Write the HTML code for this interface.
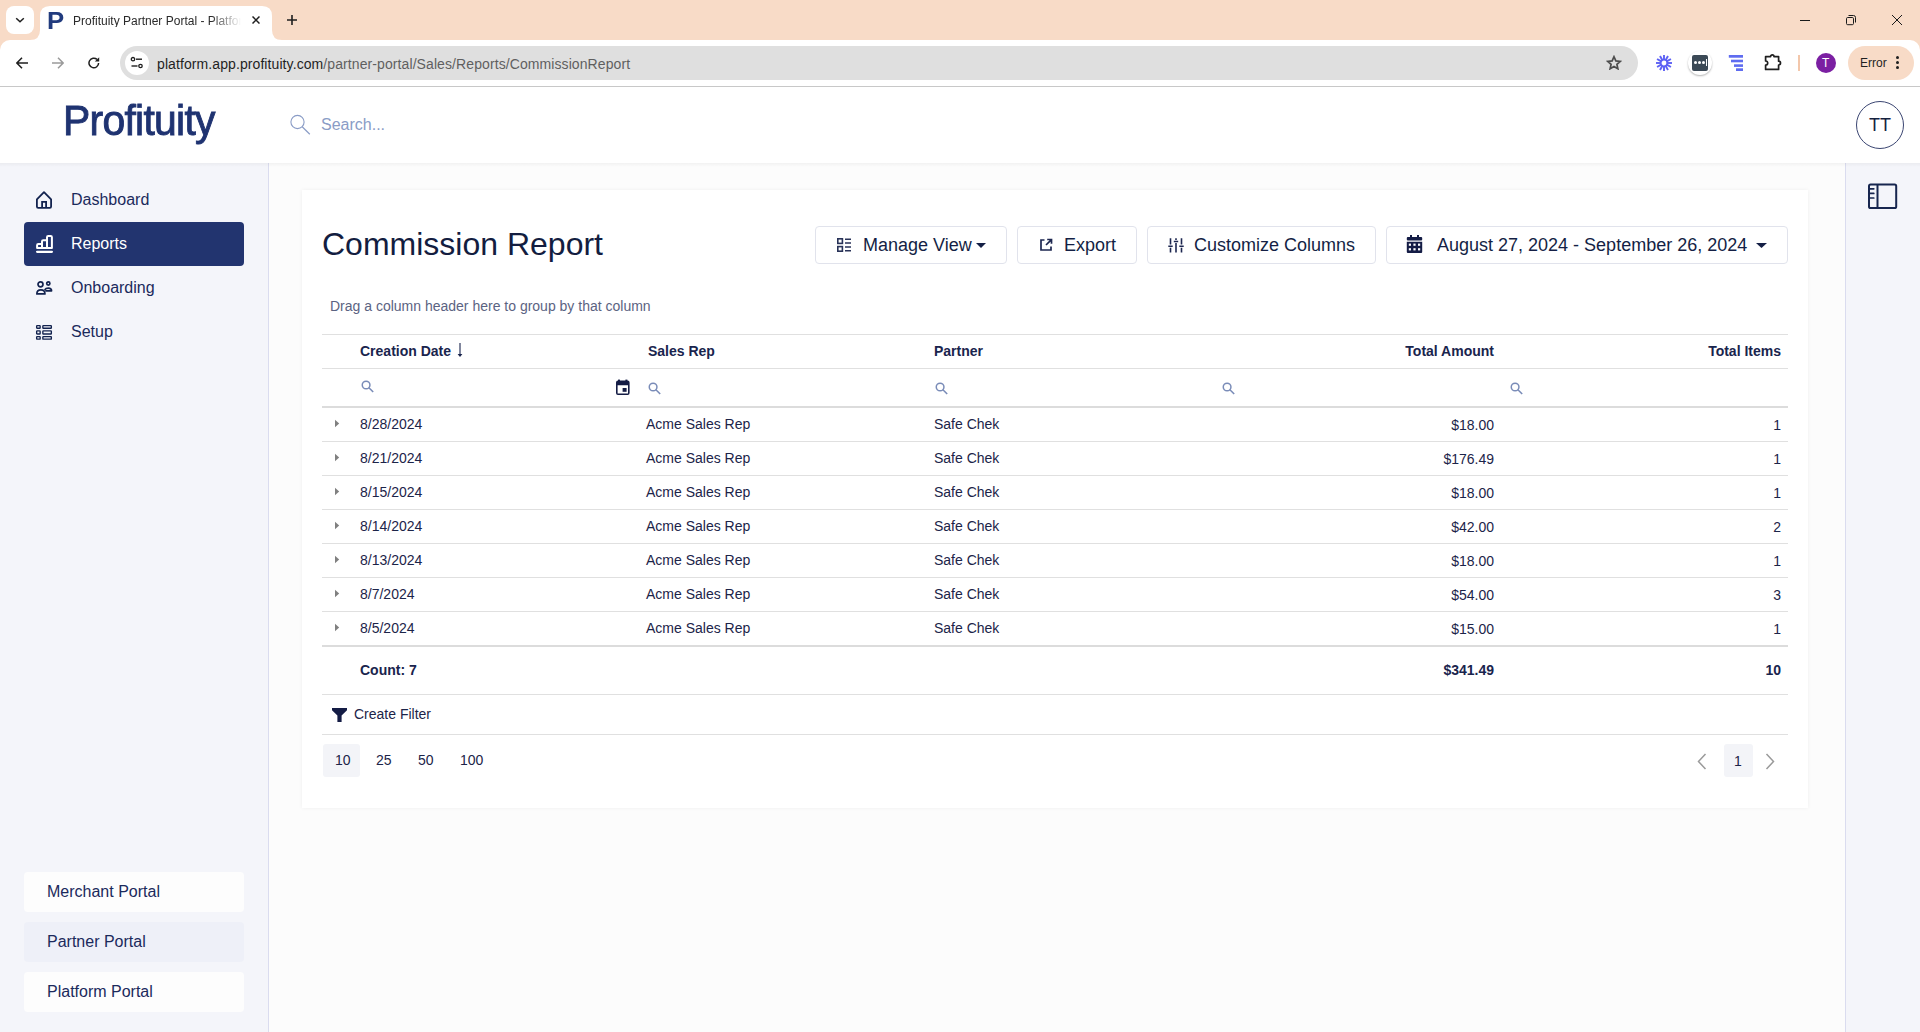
<!DOCTYPE html>
<html><head><meta charset="utf-8">
<style>
*{box-sizing:border-box;margin:0;padding:0}
html,body{width:1920px;height:1032px;overflow:hidden;background:#fcfcfc;font-family:"Liberation Sans",sans-serif;position:relative}
.a{position:absolute}
.t{position:absolute;white-space:nowrap;line-height:1}
/* chrome */
#tabstrip{left:0;top:0;width:1920px;height:52px;background:#f8dbc7}
#toolbar{left:0;top:40px;width:1920px;height:46px;background:#fff}
#tbline{left:0;top:86px;width:1920px;height:1px;background:#c8c8c8}
/* app */
#hdr{left:0;top:87px;width:1920px;height:76px;background:#fff}
#side{left:0;top:163px;width:269px;height:869px;background:#f4f5fa;border-right:1px solid #dadcef}
#rpanel{left:1845px;top:163px;width:75px;height:869px;background:#f4f5fa;border-left:1px solid #dadcef}
#card{left:302px;top:190px;width:1506px;height:618px;background:#fff;box-shadow:0 0 4px rgba(0,0,0,.06)}
.navy{color:#1b2a5c}
.hl{position:absolute;left:322px;width:1466px;height:1px;background:#e0e0e0}
.btn{position:absolute;top:226px;height:38px;border:1px solid #e1e3ec;border-radius:4px;background:#fff}
</style></head><body>
<!-- CHROME -->
<div id="tabstrip" class="a"></div>
<div class="a" style="left:6px;top:6px;width:28px;height:28px;background:#fff;border-radius:8px"></div>
<svg class="a" style="left:14px;top:14px" width="12" height="12" viewBox="0 0 12 12"><path d="M2.2 4.2 L6 7.8 L9.8 4.2" fill="none" stroke="#1f1f1f" stroke-width="1.5"/></svg>
<!-- active tab -->
<svg class="a" style="left:30px;top:6px" width="252" height="34" viewBox="0 0 252 34"><path d="M0 34 Q10 34 10 24 L10 10 Q10 0 20 0 L232 0 Q242 0 242 10 L242 24 Q242 34 252 34 Z" fill="#fff"/></svg>
<div class="t" style="left:47px;top:11px;font-size:23px;font-weight:bold;color:#213b7e;line-height:20px;transform:scaleX(1.12);transform-origin:0 0">P</div>
<div class="t" style="left:73px;top:15px;font-size:12px;color:#2a2a2a;width:168px;overflow:hidden;-webkit-mask-image:linear-gradient(to right,#000 82%,transparent 100%)">Profituity Partner Portal - Platform</div>
<svg class="a" style="left:252px;top:16px" width="8" height="8" viewBox="0 0 8 8"><path d="M0.5 0.5 L7.5 7.5 M7.5 0.5 L0.5 7.5" stroke="#1f1f1f" stroke-width="1.5"/></svg>
<svg class="a" style="left:287px;top:15px" width="10" height="10" viewBox="0 0 10 10"><path d="M5 0 V10 M0 5 H10" stroke="#1f1f1f" stroke-width="1.6"/></svg>
<!-- window controls -->
<div class="a" style="left:1800px;top:20px;width:10px;height:1px;background:#1a1a1a"></div>
<svg class="a" style="left:1845px;top:14px" width="12" height="12" viewBox="0 0 12 12"><rect x="1.5" y="3.5" width="7" height="7.2" rx="1.2" fill="none" stroke="#1a1a1a" stroke-width="1"/><path d="M3.5 1.5 H8.5 Q10.5 1.5 10.5 3.5 V8.5" fill="none" stroke="#1a1a1a" stroke-width="1"/></svg>
<svg class="a" style="left:1892px;top:15px" width="10" height="10" viewBox="0 0 10 10"><path d="M0 0 L10 10 M10 0 L0 10" stroke="#1a1a1a" stroke-width="1"/></svg>
<!-- toolbar -->
<div id="toolbar" class="a" style="border-radius:10px 10px 0 0"></div>
<div id="tbline" class="a"></div>
<svg class="a" style="left:16px;top:57px" width="12" height="12" viewBox="0 0 12 12"><path d="M6 0.8 L0.9 6 L6 11.2 M1 6 H12" fill="none" stroke="#1f1f1f" stroke-width="1.5"/></svg>
<svg class="a" style="left:52px;top:57px" width="12" height="12" viewBox="0 0 12 12"><path d="M6 0.8 L11.1 6 L6 11.2 M11 6 H0" fill="none" stroke="#9a9a9a" stroke-width="1.5"/></svg>
<svg class="a" style="left:88px;top:57px" width="12" height="12" viewBox="0 0 12 12"><path d="M10.6 6 A4.8 4.8 0 1 1 9 2.4" fill="none" stroke="#1f1f1f" stroke-width="1.5"/><path d="M11.2 0.2 V4.6 H6.8 Z" fill="#1f1f1f"/></svg>
<div class="a" style="left:120px;top:46px;width:1518px;height:34px;border-radius:17px;background:#dfdfdf"></div>
<div class="a" style="left:125px;top:51px;width:24px;height:24px;border-radius:12px;background:#fff"></div>
<svg class="a" style="left:130px;top:56px" width="14" height="14" viewBox="0 0 14 14"><circle cx="3" cy="3.2" r="1.7" fill="none" stroke="#1f1f1f" stroke-width="1.3"/><path d="M6 3.2 H12" stroke="#1f1f1f" stroke-width="1.4"/><circle cx="10.5" cy="10" r="1.7" fill="none" stroke="#1f1f1f" stroke-width="1.3"/><path d="M1.5 10 H7.5" stroke="#1f1f1f" stroke-width="1.4"/></svg>
<div class="t" style="left:157px;top:57px;font-size:14px;color:#1f1f1f;letter-spacing:0.09px">platform.app.profituity.com<span style="color:#5f5f5f">/partner-portal/Sales/Reports/CommissionReport</span></div>
<svg class="a" style="left:1606px;top:55px" width="16" height="15.33" viewBox="0 0 24 23"><path d="M12 2.6 L14.8 8.8 L21.4 9.5 L16.4 14 L17.8 20.6 L12 17.2 L6.2 20.6 L7.6 14 L2.6 9.5 L9.2 8.8 Z" fill="none" stroke="#4d4d4d" stroke-width="2.6" stroke-linejoin="miter"/></svg>
<svg class="a" style="left:1655px;top:54px" width="18" height="18" viewBox="0 0 18 18"><g stroke="#5d61f4" stroke-width="1.9" stroke-linecap="butt"><path d="M12.20 9.00 L17.00 9.00"/><path d="M11.77 10.60 L15.93 13.00"/><path d="M10.60 11.77 L13.00 15.93"/><path d="M9.00 12.20 L9.00 17.00"/><path d="M7.40 11.77 L5.00 15.93"/><path d="M6.23 10.60 L2.07 13.00"/><path d="M5.80 9.00 L1.00 9.00"/><path d="M6.23 7.40 L2.07 5.00"/><path d="M7.40 6.23 L5.00 2.07"/><path d="M9.00 5.80 L9.00 1.00"/><path d="M10.60 6.23 L13.00 2.07"/><path d="M11.77 7.40 L15.93 5.00"/></g><circle cx="9" cy="9" r="3.3" fill="none" stroke="#5d61f4" stroke-width="1.8"/></svg>
<div class="a" style="left:1688px;top:51px;width:24px;height:24px;border-radius:12px;background:#fff;box-shadow:0 1px 2px rgba(0,0,0,.3)"></div>
<div class="a" style="left:1692px;top:55px;width:16px;height:16px;border-radius:2px;background:#3b4956"></div>
<div class="a" style="left:1694px;top:61px;width:3px;height:3px;border-radius:2px;background:#fff"></div>
<div class="a" style="left:1698px;top:61px;width:3px;height:3px;border-radius:2px;background:#fff"></div>
<div class="a" style="left:1702px;top:61px;width:3px;height:3px;border-radius:2px;background:#fff"></div>
<div class="a" style="left:1706px;top:59px;width:1px;height:7px;background:#fff"></div>
<svg class="a" style="left:1728px;top:54px" width="16" height="18" viewBox="0 0 16 18"><g fill="#5f6cf0"><rect x="0.8" y="1" width="14.2" height="2.7"/><rect x="3" y="5.7" width="12" height="2.6"/><rect x="6" y="10.3" width="9" height="2.6"/><rect x="8" y="14.3" width="7" height="2.7"/></g></svg>
<svg class="a" style="left:1763px;top:52px" width="20" height="20" viewBox="0 0 20 20"><path d="M2.6 4.6 H7.6 A1.7 1.7 0 0 1 11 4.6 H15.6 V9.2 A1.9 1.9 0 0 1 15.6 13 V17.4 H2.6 V13.2 A2.1 2.1 0 0 0 2.6 9 Z" fill="none" stroke="#1f1f1f" stroke-width="1.7" stroke-linejoin="round"/></svg>
<div class="a" style="left:1798px;top:55px;width:2px;height:16px;background:#f3c7ab"></div>
<div class="a" style="left:1816px;top:53px;width:20px;height:20px;border-radius:10px;background:#7b1fa2"></div>
<div class="t" style="left:1822px;top:57px;font-size:12px;color:#fff">T</div>
<div class="a" style="left:1848px;top:46px;width:66px;height:34px;border-radius:17px;background:#f8dbc7"></div>
<div class="t" style="left:1860px;top:57px;font-size:12px;color:#1f1f1f">Error</div>
<div class="a" style="left:1896px;top:56px;width:3px;height:3px;border-radius:2px;background:#1f1f1f"></div>
<div class="a" style="left:1896px;top:61px;width:3px;height:3px;border-radius:2px;background:#1f1f1f"></div>
<div class="a" style="left:1896px;top:66px;width:3px;height:3px;border-radius:2px;background:#1f1f1f"></div>

<!-- APP -->
<div id="side" class="a"></div>
<div id="rpanel" class="a"></div>
<div id="hdr" class="a"></div>
<div class="a" style="left:0;top:163px;width:1920px;height:4px;background:linear-gradient(rgba(0,0,0,.04),rgba(0,0,0,0))"></div>
<div class="t" style="left:63px;top:96px;font-size:43px;font-weight:normal;-webkit-text-stroke:0.9px #1f3371;color:#1f3371;letter-spacing:-0.75px;line-height:48px;transform:scaleX(0.95);transform-origin:0 0">Profituity</div>
<svg class="a" style="left:289px;top:114px" width="23" height="23" viewBox="0 0 23 23"><circle cx="8.5" cy="8" r="6.6" fill="none" stroke="#8a9cc6" stroke-width="1.1"/><path d="M13.2 12.8 L20.8 20.3" stroke="#8a9cc6" stroke-width="1.2"/></svg>
<div class="t" style="left:321px;top:117px;font-size:16px;color:#8a9cc6">Search...</div>
<div class="a" style="left:1856px;top:101px;width:48px;height:48px;border-radius:24px;border:1.2px solid #3b4672;background:#fff"></div>
<div class="t" style="left:1869px;top:116px;font-size:18px;color:#15213f">TT</div>

<!-- sidebar nav -->
<svg class="a" style="left:35px;top:190px" width="19" height="20" viewBox="0 0 19 20"><path d="M1.9 9.4 L9 2.2 L16.1 9.4 V16.6 Q16.1 17.9 14.8 17.9 H3.2 Q1.9 17.9 1.9 16.6 Z" fill="none" stroke="#13234f" stroke-width="1.8" stroke-linejoin="round"/><path d="M7.1 17.9 V11.9 H11.1 V17.9" fill="none" stroke="#13234f" stroke-width="1.8"/></svg>
<div class="t navy" style="left:71px;top:191px;font-size:16px;line-height:18px">Dashboard</div>
<div class="a" style="left:24px;top:222px;width:220px;height:44px;border-radius:4px;background:#22346f"></div>
<svg class="a" style="left:35px;top:234px" width="19" height="20" viewBox="0 0 19 20"><g fill="none" stroke="#fff" stroke-width="2" stroke-linejoin="round"><path d="M2.1 13.9 V11.3 Q2.1 10.1 3.3 10.1 H7 V7.4 Q7 6.2 8.2 6.2 H12 V3.3 Q12 2.1 13.2 2.1 H15.7 Q16.9 2.1 16.9 3.3 V13.9 Z M7 10.1 V13.9 M12 6.2 V13.9"/><path d="M2.1 17.85 H16.9" stroke-width="2.3" stroke-linecap="round"/></g></svg>
<div class="t" style="left:71px;top:235px;font-size:16px;line-height:18px;color:#fff">Reports</div>
<svg class="a" style="left:35px;top:279px" width="19" height="18" viewBox="0 0 19 18"><g fill="none" stroke="#13234f" stroke-width="1.7" stroke-linejoin="round"><circle cx="5.5" cy="5.3" r="2.5"/><circle cx="13.3" cy="4.5" r="1.6"/><path d="M1.85 14.95 Q1.85 10.95 5.9 10.95 Q9.95 10.95 9.95 14.95 Z"/><path d="M9.6 10.9 Q10.9 9.05 13.3 9.05 Q16.55 9.05 16.55 11.85 H10.3"/></g></svg>
<div class="t navy" style="left:71px;top:279px;font-size:16px;line-height:18px">Onboarding</div>
<svg class="a" style="left:35px;top:324px" width="18" height="18" viewBox="0 0 18 18"><g fill="none" stroke="#13234f" stroke-width="1.35"><rect x="1.65" y="1.65" width="3.5" height="2.6" rx="0.5"/><rect x="1.65" y="6.9" width="3.5" height="3.1" rx="0.5"/><rect x="1.65" y="12.55" width="3.5" height="2.6" rx="0.5"/><rect x="7.85" y="1.65" width="8.5" height="2.6" rx="0.5"/><rect x="7.85" y="6.9" width="8.5" height="3.1" rx="0.5"/><rect x="7.85" y="12.55" width="8.5" height="2.6" rx="0.5"/></g></svg>
<div class="t navy" style="left:71px;top:323px;font-size:16px;line-height:18px">Setup</div>

<div class="a" style="left:24px;top:872px;width:220px;height:40px;border-radius:4px;background:#fdfdfd"></div>
<div class="t navy" style="left:47px;top:883px;font-size:16px;line-height:18px">Merchant Portal</div>
<div class="a" style="left:24px;top:922px;width:220px;height:40px;border-radius:4px;background:#eef0f8"></div>
<div class="t navy" style="left:47px;top:933px;font-size:16px;line-height:18px">Partner Portal</div>
<div class="a" style="left:24px;top:972px;width:220px;height:40px;border-radius:4px;background:#fdfdfd"></div>
<div class="t navy" style="left:47px;top:983px;font-size:16px;line-height:18px">Platform Portal</div>

<!-- right panel icon -->
<svg class="a" style="left:1867px;top:182px" width="32" height="29" viewBox="0 0 32 29"><rect x="2" y="2.6" width="27.2" height="23.4" rx="1.6" fill="none" stroke="#17264f" stroke-width="2"/><path d="M10.5 2.6 V26" stroke="#17264f" stroke-width="2"/><path d="M2.5 6.8 H6.8 M2.5 11.4 H6.8 M2.5 16 H6.8" stroke="#17264f" stroke-width="1.7" stroke-linecap="round"/></svg>

<div id="card" class="a"></div>
<div class="t" style="left:322px;top:226px;font-size:32px;line-height:36px;color:#131d40">Commission Report</div>
<!-- buttons -->
<div class="btn" style="left:815px;width:192px"></div>
<svg class="a" style="left:836px;top:237px" width="16" height="16" viewBox="0 0 16 16"><g fill="none" stroke="#283258" stroke-width="1.6"><rect x="1.8" y="1.8" width="4.6" height="4.6"/><rect x="1.8" y="9.6" width="4.6" height="4.6"/></g><g stroke="#283258" stroke-width="1.4"><path d="M9 2.3 H15 M9 6 H15 M9 10 H15 M9 13.7 H15"/></g></svg>
<div class="t" style="left:863px;top:236px;font-size:18px;line-height:18px;color:#141f45">Manage View</div>
<svg class="a" style="left:976px;top:243px" width="10" height="5" viewBox="0 0 10 5"><path d="M0 0 H10 L5 5 Z" fill="#141f45"/></svg>

<div class="btn" style="left:1017px;width:120px"></div>
<svg class="a" style="left:1039px;top:238px" width="14" height="14" viewBox="0 0 14 14"><g fill="none" stroke="#1d2750" stroke-width="1.7"><path d="M5.5 2 H2 V12 H12 V8.5"/><path d="M7 7 L12.2 1.8 M8.2 1.5 H12.5 V5.8"/></g></svg>
<div class="t" style="left:1064px;top:236px;font-size:18px;line-height:18px;color:#141f45">Export</div>

<div class="btn" style="left:1147px;width:229px"></div>
<svg class="a" style="left:1168px;top:238px" width="16" height="15" viewBox="0 0 16 15"><g stroke="#1d2750" stroke-width="1.6"><path d="M2.5 0.3 V6.6 M2.5 9.8 V14.4 M8 0.3 V2 M8 5 V14.4 M13.5 0.3 V6.6 M13.5 9.8 V14.4"/><path d="M0.3 8.2 H4.7 M5.8 3.5 H10.2 M11.3 8.2 H15.7" stroke-width="1.5"/></g></svg>
<div class="t" style="left:1194px;top:236px;font-size:18px;line-height:18px;color:#141f45">Customize Columns</div>

<div class="btn" style="left:1386px;width:402px"></div>
<svg class="a" style="left:1406px;top:235px" width="17" height="19" viewBox="0 0 17 19"><g fill="#141c45"><rect x="4" y="0" width="2" height="3"/><rect x="11" y="0" width="2" height="3"/><rect x="0.8" y="2" width="15.4" height="3.5" rx="1"/><path d="M0.8 6.8 H16.2 V17 Q16.2 18 15.2 18 H1.8 Q0.8 18 0.8 17 Z"/></g><g fill="#fff"><rect x="2.8" y="8.6" width="2.2" height="2.2"/><rect x="7.4" y="8.6" width="2.2" height="2.2"/><rect x="12" y="8.6" width="2.2" height="2.2"/><rect x="2.8" y="13.2" width="2.2" height="2.2"/><rect x="7.4" y="13.2" width="2.2" height="2.2"/><rect x="12" y="13.2" width="2.2" height="2.2"/></g></svg>
<div class="t" style="left:1437px;top:236px;font-size:18px;line-height:18px;color:#141f45">August 27, 2024 - September 26, 2024</div>
<svg class="a" style="left:1756px;top:243px" width="11" height="5" viewBox="0 0 11 5"><path d="M0 0 H11 L5.5 5 Z" fill="#141f45"/></svg>

<div class="t" style="left:330px;top:298px;font-size:14px;line-height:16px;color:#5b6382">Drag a column header here to group by that column</div>


<!-- table -->
<div class="hl" style="top:334px"></div>
<div class="hl" style="top:368px"></div>
<div class="hl" style="top:406px;height:2px;background:#dcdcdc"></div>
<div class="t" style="left:360px;top:343px;font-size:14px;line-height:16px;font-weight:bold;color:#19244d">Creation Date</div>
<svg class="a" style="left:456px;top:342px" width="8" height="16" viewBox="0 0 8 16"><path d="M4 1 V12.5" stroke="#19244d" stroke-width="1.1"/><path d="M1.6 12 H6.4 L4 15 Z" fill="#19244d"/></svg>
<div class="t" style="left:648px;top:343px;font-size:14px;line-height:16px;font-weight:bold;color:#19244d">Sales Rep</div>
<div class="t" style="left:934px;top:343px;font-size:14px;line-height:16px;font-weight:bold;color:#19244d">Partner</div>
<div class="t" style="left:1294px;top:343px;width:200px;text-align:right;font-size:14px;line-height:16px;font-weight:bold;color:#19244d">Total Amount</div>
<div class="t" style="left:1581px;top:343px;width:200px;text-align:right;font-size:14px;line-height:16px;font-weight:bold;color:#19244d">Total Items</div>
<svg class="a" style="left:361px;top:380px" width="14" height="14" viewBox="0 0 14 14"><circle cx="5.1" cy="5" r="3.85" fill="none" stroke="#7a8cb8" stroke-width="1.5"/><path d="M7.9 7.8 L12.2 12" stroke="#7a8cb8" stroke-width="1.6"/></svg>
<svg class="a" style="left:648px;top:382px" width="14" height="14" viewBox="0 0 14 14"><circle cx="5.1" cy="5" r="3.85" fill="none" stroke="#7a8cb8" stroke-width="1.5"/><path d="M7.9 7.8 L12.2 12" stroke="#7a8cb8" stroke-width="1.6"/></svg>
<svg class="a" style="left:935px;top:382px" width="14" height="14" viewBox="0 0 14 14"><circle cx="5.1" cy="5" r="3.85" fill="none" stroke="#7a8cb8" stroke-width="1.5"/><path d="M7.9 7.8 L12.2 12" stroke="#7a8cb8" stroke-width="1.6"/></svg>
<svg class="a" style="left:1222px;top:382px" width="14" height="14" viewBox="0 0 14 14"><circle cx="5.1" cy="5" r="3.85" fill="none" stroke="#7a8cb8" stroke-width="1.5"/><path d="M7.9 7.8 L12.2 12" stroke="#7a8cb8" stroke-width="1.6"/></svg>
<svg class="a" style="left:1510px;top:382px" width="14" height="14" viewBox="0 0 14 14"><circle cx="5.1" cy="5" r="3.85" fill="none" stroke="#7a8cb8" stroke-width="1.5"/><path d="M7.9 7.8 L12.2 12" stroke="#7a8cb8" stroke-width="1.6"/></svg>
<svg class="a" style="left:615px;top:379px" width="16" height="17" viewBox="0 0 16 17"><g fill="#141c45"><rect x="3" y="0.6" width="2" height="2"/><rect x="10.4" y="0.6" width="2" height="2"/><path d="M1 3.5 Q1 1.5 3 1.5 H12.6 Q14.6 1.5 14.6 3.5 V14 Q14.6 16 12.6 16 H3 Q1 16 1 14 Z M2.6 6.3 V14.4 H13 V6.3 Z" fill-rule="evenodd"/><rect x="7.6" y="9" width="4" height="3.8"/></g></svg>
<div class="hl" style="top:441px"></div>
<svg class="a" style="left:334px;top:419px" width="6" height="9" viewBox="0 0 6 9"><path d="M1 0.7 L5.2 4.5 L1 8.3 Z" fill="#808080"/></svg>
<div class="t" style="left:360px;top:416px;font-size:14px;line-height:16px;color:#1c2449">8/28/2024</div>
<div class="t" style="left:646px;top:416px;font-size:14px;line-height:16px;color:#1c2449">Acme Sales Rep</div>
<div class="t" style="left:934px;top:416px;font-size:14px;line-height:16px;color:#1c2449">Safe Chek</div>
<div class="t" style="left:1294px;top:417px;width:200px;text-align:right;font-size:14px;line-height:16px;color:#1c2449">$18.00</div>
<div class="t" style="left:1581px;top:417px;width:200px;text-align:right;font-size:14px;line-height:16px;color:#1c2449">1</div>
<div class="hl" style="top:475px"></div>
<svg class="a" style="left:334px;top:453px" width="6" height="9" viewBox="0 0 6 9"><path d="M1 0.7 L5.2 4.5 L1 8.3 Z" fill="#808080"/></svg>
<div class="t" style="left:360px;top:450px;font-size:14px;line-height:16px;color:#1c2449">8/21/2024</div>
<div class="t" style="left:646px;top:450px;font-size:14px;line-height:16px;color:#1c2449">Acme Sales Rep</div>
<div class="t" style="left:934px;top:450px;font-size:14px;line-height:16px;color:#1c2449">Safe Chek</div>
<div class="t" style="left:1294px;top:451px;width:200px;text-align:right;font-size:14px;line-height:16px;color:#1c2449">$176.49</div>
<div class="t" style="left:1581px;top:451px;width:200px;text-align:right;font-size:14px;line-height:16px;color:#1c2449">1</div>
<div class="hl" style="top:509px"></div>
<svg class="a" style="left:334px;top:487px" width="6" height="9" viewBox="0 0 6 9"><path d="M1 0.7 L5.2 4.5 L1 8.3 Z" fill="#808080"/></svg>
<div class="t" style="left:360px;top:484px;font-size:14px;line-height:16px;color:#1c2449">8/15/2024</div>
<div class="t" style="left:646px;top:484px;font-size:14px;line-height:16px;color:#1c2449">Acme Sales Rep</div>
<div class="t" style="left:934px;top:484px;font-size:14px;line-height:16px;color:#1c2449">Safe Chek</div>
<div class="t" style="left:1294px;top:485px;width:200px;text-align:right;font-size:14px;line-height:16px;color:#1c2449">$18.00</div>
<div class="t" style="left:1581px;top:485px;width:200px;text-align:right;font-size:14px;line-height:16px;color:#1c2449">1</div>
<div class="hl" style="top:543px"></div>
<svg class="a" style="left:334px;top:521px" width="6" height="9" viewBox="0 0 6 9"><path d="M1 0.7 L5.2 4.5 L1 8.3 Z" fill="#808080"/></svg>
<div class="t" style="left:360px;top:518px;font-size:14px;line-height:16px;color:#1c2449">8/14/2024</div>
<div class="t" style="left:646px;top:518px;font-size:14px;line-height:16px;color:#1c2449">Acme Sales Rep</div>
<div class="t" style="left:934px;top:518px;font-size:14px;line-height:16px;color:#1c2449">Safe Chek</div>
<div class="t" style="left:1294px;top:519px;width:200px;text-align:right;font-size:14px;line-height:16px;color:#1c2449">$42.00</div>
<div class="t" style="left:1581px;top:519px;width:200px;text-align:right;font-size:14px;line-height:16px;color:#1c2449">2</div>
<div class="hl" style="top:577px"></div>
<svg class="a" style="left:334px;top:555px" width="6" height="9" viewBox="0 0 6 9"><path d="M1 0.7 L5.2 4.5 L1 8.3 Z" fill="#808080"/></svg>
<div class="t" style="left:360px;top:552px;font-size:14px;line-height:16px;color:#1c2449">8/13/2024</div>
<div class="t" style="left:646px;top:552px;font-size:14px;line-height:16px;color:#1c2449">Acme Sales Rep</div>
<div class="t" style="left:934px;top:552px;font-size:14px;line-height:16px;color:#1c2449">Safe Chek</div>
<div class="t" style="left:1294px;top:553px;width:200px;text-align:right;font-size:14px;line-height:16px;color:#1c2449">$18.00</div>
<div class="t" style="left:1581px;top:553px;width:200px;text-align:right;font-size:14px;line-height:16px;color:#1c2449">1</div>
<div class="hl" style="top:611px"></div>
<svg class="a" style="left:334px;top:589px" width="6" height="9" viewBox="0 0 6 9"><path d="M1 0.7 L5.2 4.5 L1 8.3 Z" fill="#808080"/></svg>
<div class="t" style="left:360px;top:586px;font-size:14px;line-height:16px;color:#1c2449">8/7/2024</div>
<div class="t" style="left:646px;top:586px;font-size:14px;line-height:16px;color:#1c2449">Acme Sales Rep</div>
<div class="t" style="left:934px;top:586px;font-size:14px;line-height:16px;color:#1c2449">Safe Chek</div>
<div class="t" style="left:1294px;top:587px;width:200px;text-align:right;font-size:14px;line-height:16px;color:#1c2449">$54.00</div>
<div class="t" style="left:1581px;top:587px;width:200px;text-align:right;font-size:14px;line-height:16px;color:#1c2449">3</div>
<svg class="a" style="left:334px;top:623px" width="6" height="9" viewBox="0 0 6 9"><path d="M1 0.7 L5.2 4.5 L1 8.3 Z" fill="#808080"/></svg>
<div class="t" style="left:360px;top:620px;font-size:14px;line-height:16px;color:#1c2449">8/5/2024</div>
<div class="t" style="left:646px;top:620px;font-size:14px;line-height:16px;color:#1c2449">Acme Sales Rep</div>
<div class="t" style="left:934px;top:620px;font-size:14px;line-height:16px;color:#1c2449">Safe Chek</div>
<div class="t" style="left:1294px;top:621px;width:200px;text-align:right;font-size:14px;line-height:16px;color:#1c2449">$15.00</div>
<div class="t" style="left:1581px;top:621px;width:200px;text-align:right;font-size:14px;line-height:16px;color:#1c2449">1</div>
<div class="hl" style="top:645px;height:2px;background:#dcdcdc"></div>
<div class="t" style="left:360px;top:662px;font-size:14px;line-height:16px;font-weight:bold;color:#19244d">Count: 7</div>
<div class="t" style="left:1294px;top:662px;width:200px;text-align:right;font-size:14px;line-height:16px;font-weight:bold;color:#19244d">$341.49</div>
<div class="t" style="left:1581px;top:662px;width:200px;text-align:right;font-size:14px;line-height:16px;font-weight:bold;color:#19244d">10</div>
<div class="hl" style="top:694px"></div>
<svg class="a" style="left:331px;top:707px" width="17" height="16" viewBox="0 0 17 16"><path d="M1 1 H16 V3.2 L10.6 8.6 V15 H6.4 V8.6 L1 3.2 Z" fill="#141c45"/></svg>
<div class="t" style="left:354px;top:706px;font-size:14px;line-height:16px;color:#1c2449">Create Filter</div>
<div class="hl" style="top:734px"></div>
<div class="a" style="left:323px;top:744px;width:37px;height:33px;border-radius:3px;background:#f3f4f8"></div>
<div class="t" style="left:335px;top:752px;font-size:14px;line-height:16px;color:#1c2449">10</div>
<div class="t" style="left:376px;top:752px;font-size:14px;line-height:16px;color:#1c2449">25</div>
<div class="t" style="left:418px;top:752px;font-size:14px;line-height:16px;color:#1c2449">50</div>
<div class="t" style="left:460px;top:752px;font-size:14px;line-height:16px;color:#1c2449">100</div>
<svg class="a" style="left:1697px;top:753px" width="10" height="17" viewBox="0 0 10 17"><path d="M8.5 1 L1.5 8.5 L8.5 16" fill="none" stroke="#9a9a9a" stroke-width="1.5"/></svg>
<div class="a" style="left:1724px;top:744px;width:29px;height:33px;border-radius:3px;background:#f3f4f8"></div>
<div class="t" style="left:1734px;top:753px;font-size:14px;line-height:16px;color:#1c2449">1</div>
<svg class="a" style="left:1765px;top:753px" width="10" height="17" viewBox="0 0 10 17"><path d="M1.5 1 L8.5 8.5 L1.5 16" fill="none" stroke="#9a9a9a" stroke-width="1.5"/></svg>
</body></html>
